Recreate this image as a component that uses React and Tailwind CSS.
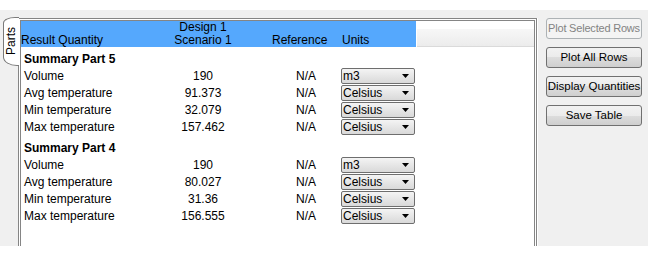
import React from "react";

const groups = [
  {
    title: "Summary Part 5",
    rows: [
      { name: "Volume", value: "190", unit: "m3" },
      { name: "Avg temperature", value: "91.373", unit: "Celsius" },
      { name: "Min temperature", value: "32.079", unit: "Celsius" },
      { name: "Max temperature", value: "157.462", unit: "Celsius" },
    ],
  },
  {
    title: "Summary Part 4",
    rows: [
      { name: "Volume", value: "190", unit: "m3" },
      { name: "Avg temperature", value: "80.027", unit: "Celsius" },
      { name: "Min temperature", value: "31.36", unit: "Celsius" },
      { name: "Max temperature", value: "156.555", unit: "Celsius" },
    ],
  },
];

function UnitSelect({ value }) {
  return (
    <div className="relative ml-px w-[74px] h-[16px] border border-[#6e6e6e] rounded-[2px] bg-gradient-to-b from-[#f4f4f4] to-[#d9d9d9] pl-px leading-[14px]">
      {value}
      <svg className="absolute right-[5px] top-[5px]" width="7" height="4" viewBox="0 0 7 4">
        <polygon points="0,0 7,0 3.5,4" fill="#000" />
      </svg>
    </div>
  );
}

function SideButton({ label, disabled }) {
  return (
    <button
      className={
        disabled
          ? "w-[96px] h-[21px] px-0 whitespace-nowrap rounded-[3px] border border-[#adb2b5] bg-[#f4f4f4] text-[#838383] text-[11px] tracking-[-0.2px] leading-[19px]"
          : "w-[96px] h-[21px] px-0 whitespace-nowrap rounded-[3px] border border-[#707070] bg-[linear-gradient(#f2f2f2_0%,#ebebeb_50%,#dddddd_50%,#cfcfcf_100%)] text-black text-[11.5px] leading-[19px]"
      }
    >
      {label}
    </button>
  );
}

export default function App() {
  return (
    <div className="w-[658px] h-[256px] bg-white pt-[10px] font-['Liberation_Sans',Arial,sans-serif] text-[12px] text-black">
      <div className="w-[648px] h-[236px] bg-[#f0f0f0] flex overflow-hidden">
        {/* Vertical tab */}
        <div className="w-[18px] shrink-0">
          <div className="relative z-10 ml-[3px] mt-[7px] w-[16px] h-[49px] bg-white border-l border-t border-b border-[#7a7a7a] rounded-tl-[12px_6px] rounded-bl-[14px_9px] flex items-center justify-center">
            <span className="[writing-mode:vertical-rl] rotate-180 leading-[12px] -ml-px">Parts</span>
          </div>
        </div>

        {/* Table panel */}
        <div className="w-[520px] shrink-0 mt-[8px] border-r border-white">
          <div className="h-[240px] border border-[#858585] p-px bg-white">
            <div className="h-full border border-[#858585] bg-white">
              {/* Header */}
              <div className="flex h-[26px]">
                <div className="w-[395px] bg-[#55a8fd] grid grid-cols-[142px_80px_97px_76px] items-end leading-[13px]">
                  <div>Result Quantity</div>
                  <div className="text-center">
                    Design 1
                    <br />
                    Scenario 1
                  </div>
                  <div className="pl-[29px]">Reference</div>
                  <div className="pl-[2px]">Units</div>
                </div>
                <div className="flex-1 ml-px flex flex-col">
                  <div className="h-[8px] bg-white" />
                  <div className="flex-1 bg-gradient-to-b from-[#f7f7f7] to-[#ececec] border-b border-[#dadada]" />
                </div>
              </div>

              {/* Body */}
              {groups.map((g) => (
                <div key={g.title} className="mt-[4px]">
                  <div className="pl-[3px] font-bold leading-[17px]">{g.title}</div>
                  {g.rows.map((r) => (
                    <div key={r.name} className="grid grid-cols-[142px_80px_97px_76px] h-[17px] leading-[17px]">
                      <div className="pl-[3px]">{r.name}</div>
                      <div className="text-center">{r.value}</div>
                      <div className="pl-[53px]">N/A</div>
                      <div>
                        <UnitSelect value={r.unit} />
                      </div>
                    </div>
                  ))}
                </div>
              ))}
            </div>
          </div>
        </div>

        {/* Side buttons */}
        <div className="flex-1 pl-[8px] pt-[8px] flex flex-col gap-[8px]">
          <SideButton label="Plot Selected Rows" disabled />
          <SideButton label="Plot All Rows" />
          <SideButton label="Display Quantities" />
          <SideButton label="Save Table" />
        </div>
      </div>
    </div>
  );
}
